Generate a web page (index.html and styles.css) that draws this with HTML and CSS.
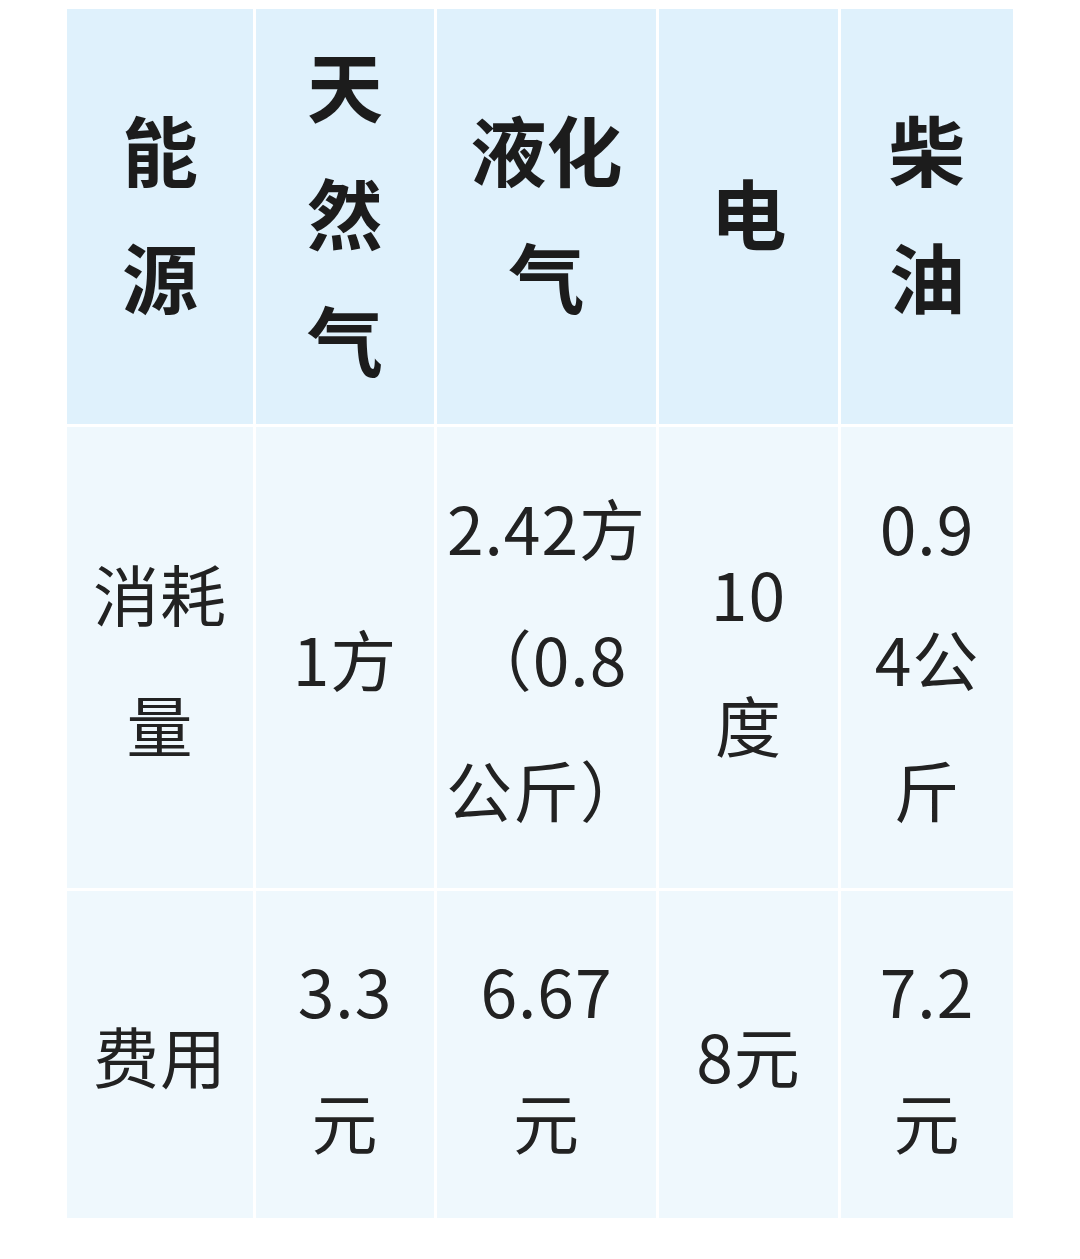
FILE: index.html
```html
<!DOCTYPE html>
<html lang="zh-CN">
<head>
<meta charset="utf-8">
<title>能源费用对比</title>
<link rel="stylesheet" href="styles.css">
</head>
<body>
<div class="sheet">
  <div class="cell head">能<br>源</div>
  <div class="cell head">天<br>然<br>气</div>
  <div class="cell head">液化<br>气</div>
  <div class="cell head">电</div>
  <div class="cell head">柴<br>油</div>

  <div class="cell">消耗<br>量</div>
  <div class="cell">1方</div>
  <div class="cell">2.42方<br>（0.8<br>公斤）</div>
  <div class="cell">10<br>度</div>
  <div class="cell">0.9<br>4公<br>斤</div>

  <div class="cell">费用</div>
  <div class="cell">3.3<br>元</div>
  <div class="cell">6.67<br>元</div>
  <div class="cell">8元</div>
  <div class="cell">7.2<br>元</div>
</div>
</body>
</html>
```

FILE: styles.css
```css
html, body {
  margin: 0;
  padding: 0;
  background: #ffffff;
}

body {
  font-family: "Noto Sans CJK SC", "Noto Sans", sans-serif;
  color: #222222;
}

.sheet {
  display: grid;
  grid-template-columns: 186px 178px 219px 179px 172px;
  grid-template-rows: 415px 461px 327px;
  gap: 3px;
  margin: 9px 0 0 67px;
  width: 946px;
}

.cell {
  display: flex;
  align-items: center;
  justify-content: center;
  text-align: center;
  background: #eff8fd;
  font-size: 66px;
  line-height: 131px;
  font-weight: 400;
  letter-spacing: 1px;
}

.cell.head {
  background: #dff1fc;
  font-size: 76px;
  line-height: 127px;
  font-weight: 700;
  color: #1c1c1c;
  letter-spacing: 0;
  padding-bottom: 10px;
}
```
